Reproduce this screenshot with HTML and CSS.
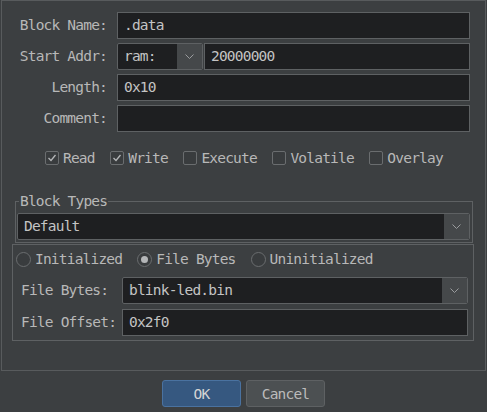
FILE: index.html
```html
<!DOCTYPE html>
<html>
<head>
<meta charset="utf-8">
<link rel="stylesheet" href="styles.css">
</head>
<body>
<div class="dialog">
  <div class="panel">
    <div class="form">
      <label class="lbl">Block Name:</label>
      <div class="field">.data</div>
      <label class="lbl">Start Addr:</label>
      <div class="addr">
        <div class="combo space">
          <span class="ctext">ram:</span>
          <span class="drop"><svg width="9" height="5" viewBox="0 0 9 5"><path d="M0.5 0.5 L4.5 4.5 L8.5 0.5" fill="none" stroke="#9a9c9e" stroke-width="1"/></svg></span>
        </div>
        <div class="field grow">20000000</div>
      </div>
      <label class="lbl">Length:</label>
      <div class="field">0x10</div>
      <label class="lbl">Comment:</label>
      <div class="field"></div>
    </div>

    <div class="checks">
      <span class="check"><span class="box on"><svg width="12" height="12" viewBox="0 0 12 12"><path d="M2.5 6 L5 8.5 L9.5 3" fill="none" stroke="#b4b6b8" stroke-width="1.3"/></svg></span>Read</span>
      <span class="check"><span class="box on"><svg width="12" height="12" viewBox="0 0 12 12"><path d="M2.5 6 L5 8.5 L9.5 3" fill="none" stroke="#b4b6b8" stroke-width="1.3"/></svg></span>Write</span>
      <span class="check"><span class="box"></span>Execute</span>
      <span class="check"><span class="box"></span>Volatile</span>
      <span class="check"><span class="box"></span>Overlay</span>
    </div>

    <fieldset class="types">
      <legend>Block Types</legend>
      <div class="combo">
        <span class="ctext">Default</span>
        <span class="drop"><svg width="9" height="5" viewBox="0 0 9 5"><path d="M0.5 0.5 L4.5 4.5 L8.5 0.5" fill="none" stroke="#9a9c9e" stroke-width="1"/></svg></span>
      </div>
    </fieldset>

    <div class="radiopanel">
      <div class="radios">
        <span class="radio"><span class="circle"></span>Initialized</span>
        <span class="radio"><span class="circle sel"></span>File Bytes</span>
        <span class="radio"><span class="circle"></span>Uninitialized</span>
      </div>
      <div class="subform">
        <label class="lbl2">File Bytes:</label>
        <div class="combo">
          <span class="ctext">blink-led.bin</span>
          <span class="drop"><svg width="9" height="5" viewBox="0 0 9 5"><path d="M0.5 0.5 L4.5 4.5 L8.5 0.5" fill="none" stroke="#9a9c9e" stroke-width="1"/></svg></span>
        </div>
        <label class="lbl2">File Offset:</label>
        <div class="field">0x2f0</div>
      </div>
    </div>
  </div>

  <div class="buttons">
    <button class="btn ok">OK</button>
    <button class="btn">Cancel</button>
  </div>
</div>
</body>
</html>
```

FILE: styles.css
```css
* { box-sizing: border-box; }

html, body {
  margin: 0;
  padding: 0;
  background: #3c3f41;
}

body {
  font-family: "DejaVu Sans Mono", "Liberation Mono", monospace;
  font-size: 14.5px;
  letter-spacing: -0.8px;
  color: #b8b8b8;
  width: 487px;
  height: 412px;
  overflow: hidden;
}

.dialog {
  width: 487px;
  height: 412px;
}

.panel {
  margin-left: 1px;
  width: 485px;
  height: 371px;
  border: 1px solid #585b5d;
}

.form {
  display: grid;
  grid-template-columns: 105px 1fr;
  column-gap: 10px;
  row-gap: 4px;
  padding: 11px 15px 0 0;
}

.lbl {
  text-align: right;
  line-height: 27px;
  height: 27px;
  white-space: nowrap;
}

.field {
  height: 27px;
  line-height: 25px;
  background: #1e1f21;
  border: 1px solid #5e6163;
  padding: 0 6px;
  color: #c4c4c4;
  white-space: nowrap;
}

.addr {
  display: flex;
  gap: 1px;
}

.grow { flex: 1; }

.combo {
  height: 27px;
  display: flex;
  background: #1e1f21;
  border: 1px solid #5e6163;
  border-radius: 2px;
  color: #c4c4c4;
}

.combo.space { width: 86px; }

.ctext {
  flex: 1;
  padding: 0 6px;
  line-height: 25px;
  white-space: nowrap;
}

.drop {
  width: 25px;
  background: #45484a;
  display: flex;
  align-items: center;
  justify-content: center;
  border-radius: 0 1px 1px 0;
}

.checks {
  margin-top: 16px;
  height: 20px;
  display: flex;
  align-items: center;
  gap: 15.5px;
  padding-left: 43px;
}

.check {
  display: flex;
  align-items: center;
  gap: 4px;
}

.box {
  width: 14px;
  height: 14px;
  border: 1px solid #6a6d6f;
  border-radius: 2px;
  background: #393c3e;
  display: flex;
  align-items: center;
  justify-content: center;
}

.types {
  margin: 25px 12px 0 13px;
  padding: 4px 2px 2px 1px;
  border: 1px solid #5e6163;
  min-width: 0;
}

.types legend {
  margin-left: 2px;
  padding: 0 1px;
  line-height: 16px;
}

.radiopanel {
  margin: 1px 11px 0 10px;
  height: 97px;
  border: 1px solid #5e6163;
  padding: 4px 5px 0 0;
}

.radios {
  height: 20px;
  display: flex;
  align-items: center;
  gap: 15px;
  padding-left: 3px;
}

.radio {
  display: flex;
  align-items: center;
  gap: 4px;
}

.circle {
  width: 15px;
  height: 15px;
  border-radius: 50%;
  border: 1px solid #6a6d6f;
  background: #393c3e;
  display: flex;
  align-items: center;
  justify-content: center;
}

.circle.sel::after {
  content: "";
  width: 7px;
  height: 7px;
  border-radius: 50%;
  background: #b4b6b8;
}

.subform {
  margin-top: 8px;
  display: grid;
  grid-template-columns: 95px 1fr;
  column-gap: 6px;
  row-gap: 5px;
  padding-left: 8px;
}

.lbl2 {
  line-height: 27px;
  height: 27px;
  white-space: nowrap;
}

.buttons {
  margin-top: 9px;
  display: flex;
  justify-content: center;
  gap: 5px;
}

.btn {
  width: 79px;
  height: 27px;
  font-family: inherit;
  font-size: 14.5px;
  letter-spacing: -0.8px;
  color: #bbbbbb;
  background: #4c5052;
  border: 1px solid #5e6163;
  border-radius: 3px;
  padding: 0;
}

.btn.ok {
  background: #365880;
  border-color: #4a72a0;
  color: #d4d4d4;
}
```
